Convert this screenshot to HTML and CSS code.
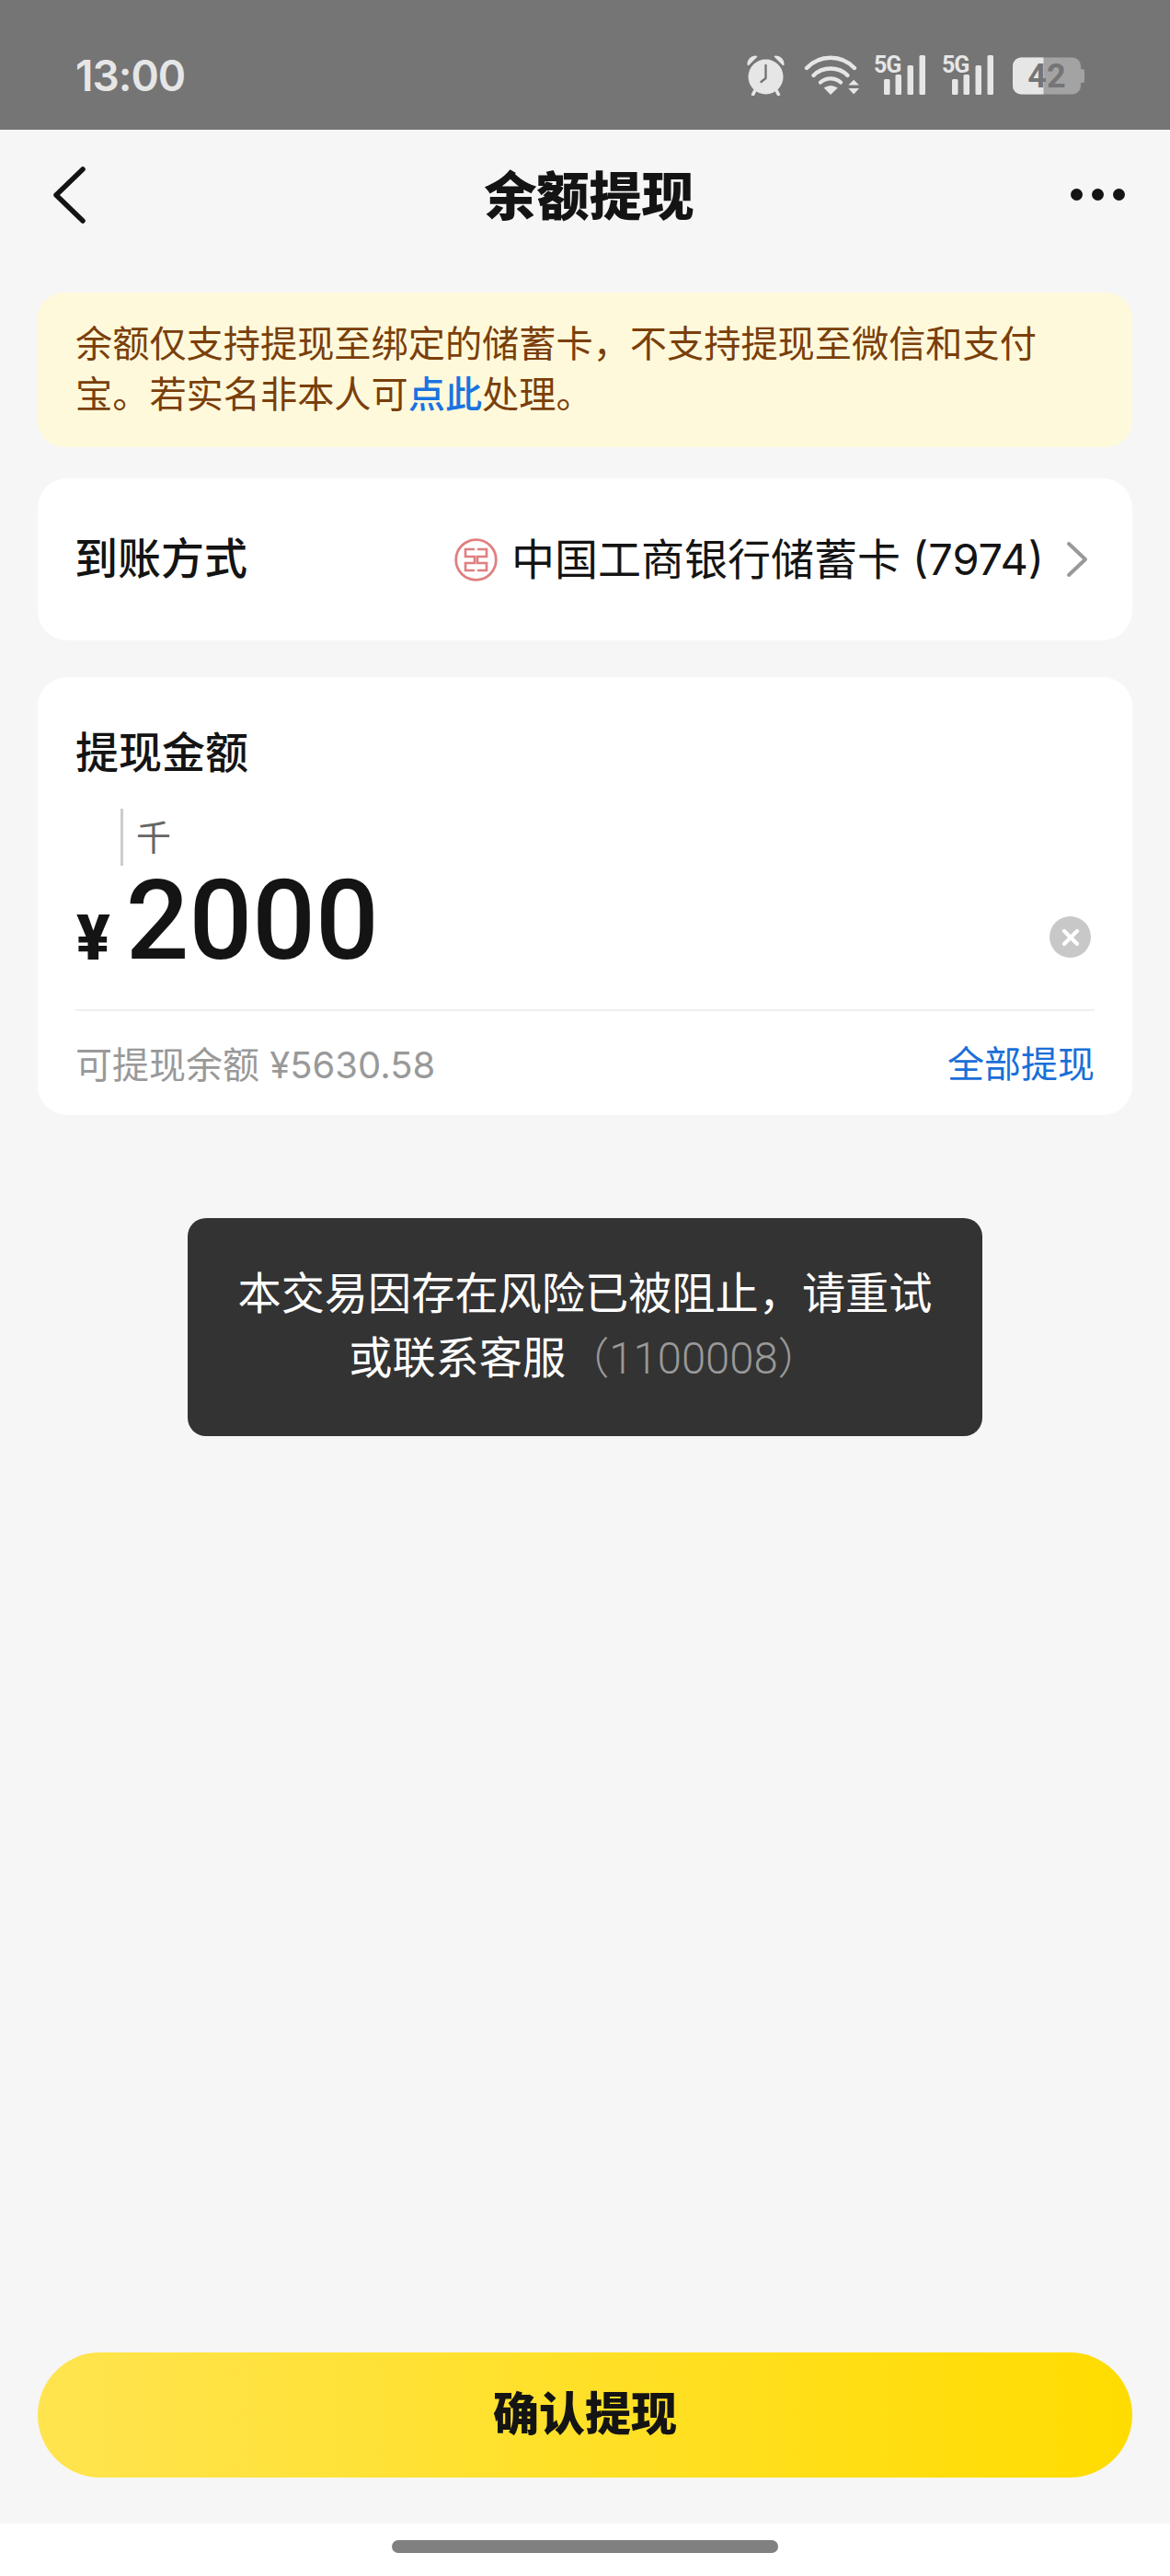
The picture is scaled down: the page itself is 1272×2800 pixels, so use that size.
FILE: index.html
```html
<!DOCTYPE html>
<html lang="zh-CN">
<head>
<meta charset="utf-8">
<title>余额提现</title>
<link rel="stylesheet" href="styles.css">
</head>
<body>
<div class="app">
  <header class="status">
    <span class="time">13:00</span>
    <div class="status-icons">
      <svg class="ic-alarm" width="43" height="45" viewBox="0 0 43 45">
        <circle cx="21.5" cy="24.5" r="19" fill="#e6e6e6"/>
        <path d="M1.5 11.5C1 6 5 1.5 11 1.5c1.2 0 1.6 1 .8 1.8L3.3 11.8c-.7.7-1.6.6-1.8-.3zM41.5 11.5C42 6 38 1.5 32 1.5c-1.2 0-1.6 1-.8 1.8l8.5 8.5c.7.7 1.6.6 1.8-.3z" fill="#e6e6e6"/>
        <path d="M10 39l-3 6M33 39l3 6" stroke="#e6e6e6" stroke-width="3.5"/>
        <path d="M21.5 12v14l-5 4" fill="none" stroke="#757575" stroke-width="2.4" stroke-linecap="round" stroke-linejoin="round"/>
      </svg>
      <svg class="ic-wifi" width="60" height="43" viewBox="0 0 60 43">
        <g fill="none" stroke="#e6e6e6" stroke-width="4.4" stroke-linecap="round">
          <path d="M3 14C17 -1 41 -1 55 14"/>
          <path d="M10.5 22C20 12 38 12 47.5 22"/>
          <path d="M18 29.5C24 24 34 24 40 29.5"/>
        </g>
        <path d="M21.7 35.5Q29 30.5 36.7 35.5L29 43zM48.3 32.5L54.2 26.7 60 32.5zM48.3 36L60 36 54.2 42.5z" fill="#e6e6e6"/>
      </svg>
      <svg class="ic-cell" width="57" height="50" viewBox="0 -6 57 50">
        <text class="cell-text" x="0" y="19.5">5G</text>
        <rect x="11" y="27" width="6.5" height="17" rx="1.5"/>
        <rect x="23.5" y="22" width="6.5" height="22" rx="1.5"/>
        <rect x="36.5" y="12" width="6.5" height="32" rx="1.5"/>
        <rect x="49.5" y="1" width="6.5" height="43" rx="1.5"/>
      </svg>
      <svg class="ic-cell" width="57" height="50" viewBox="0 -6 57 50">
        <text class="cell-text" x="0" y="19.5">5G</text>
        <rect x="11" y="27" width="6.5" height="17" rx="1.5"/>
        <rect x="23.5" y="22" width="6.5" height="22" rx="1.5"/>
        <rect x="36.5" y="12" width="6.5" height="32" rx="1.5"/>
        <rect x="49.5" y="1" width="6.5" height="43" rx="1.5"/>
      </svg>
      <svg class="ic-batt" width="78" height="41" viewBox="0 0 78 41">
        <rect x="0" y="0.5" width="74" height="40" rx="9" fill="#a3a3a3"/>
        <path d="M33.5 .5H9a9 9 0 0 0-9 9v22a9 9 0 0 0 9 9h24.5z" fill="#e6e6e6"/>
        <path d="M74 13h1.5a2.5 2.5 0 0 1 2.5 2.5v10a2.5 2.5 0 0 1-2.5 2.5H74z" fill="#a3a3a3"/>
        <text class="batt-text" x="37" y="33">42</text>
      </svg>
    </div>
  </header>

  <nav class="nav">
    <svg class="nav-back" width="36" height="62" viewBox="0 0 36 62">
      <path d="M32 3L3 31l29 28" fill="none" stroke="#141414" stroke-width="5.5" stroke-linecap="round" stroke-linejoin="round"/>
    </svg>
    <h1 class="nav-title">余额提现</h1>
    <div class="nav-more"><i></i><i></i><i></i></div>
  </nav>

  <main class="content">
    <p class="notice">余额仅支持提现至绑定的储蓄卡，不支持提现至微信和支付宝。若实名非本人可<a class="notice-link">点此</a>处理。</p>

    <section class="card method">
      <span class="method-label">到账方式</span>
      <div class="method-value">
        <svg class="bank-logo" width="47" height="47" viewBox="0 0 47 47">
          <circle cx="23.5" cy="23.5" r="21.8" fill="none" stroke="#e07f80" stroke-width="2.8"/>
          <path d="M22 12H12V20H22V27H12V35H22M25 12H35V20H25V27H35V35H25" fill="none" stroke="#e07f80" stroke-width="2.6"/>
        </svg>
        <span class="bank-name">中国工商银行储蓄卡 (7974)</span>
        <svg class="chev" width="24" height="40" viewBox="0 0 24 40">
          <path d="M3 3l18 17L3 37" fill="none" stroke="#999" stroke-width="4" stroke-linecap="round" stroke-linejoin="round"/>
        </svg>
      </div>
    </section>

    <section class="card amount">
      <h2 class="amount-title">提现金额</h2>
      <div class="unit-row"><span class="caret"></span><span class="unit">千</span></div>
      <div class="amount-row">
        <span class="yen">¥</span>
        <span class="value">2000</span>
        <span class="clear">
          <svg width="20" height="20" viewBox="0 0 20 20"><path d="M3 3l14 14M17 3L3 17" stroke="#fff" stroke-width="4.2" stroke-linecap="round"/></svg>
        </span>
      </div>
      <div class="amount-foot">
        <span class="balance">可提现余额 ¥5630.58</span>
        <a class="all">全部提现</a>
      </div>
    </section>
  </main>

  <div class="toast">本交易因存在风险已被阻止，请重试<br>或联系客服<span class="toast-code">（1100008）</span></div>

  <div class="action"><button class="confirm">确认提现</button></div>

  <footer class="home"><span class="home-bar"></span></footer>
</div>
</body>
</html>
```
FILE: styles.css
```css
* { box-sizing: border-box; }
html, body { margin: 0; padding: 0; }
body {
  font-family: Roboto, "Noto Sans CJK SC", sans-serif;
  color: #141414;
  background: #f6f6f6;
}
.app {
  position: relative;
  width: 1272px;
  height: 2800px;
  display: flex;
  flex-direction: column;
  background: #f6f6f6;
}

/* status bar */
.status {
  height: 141px;
  flex: none;
  background: #757575;
  display: flex;
  align-items: flex-start;
  justify-content: space-between;
  padding: 59px 93px 0 82px;
}
.time {
  font-family: Inter, Roboto, sans-serif;
  font-size: 46px;
  line-height: 46px;
  font-weight: 600;
  letter-spacing: -1px;
  color: #e6e6e6;
}
.status-icons { display: flex; align-items: flex-start; }
.status-icons svg { display: block; flex: none; }
.ic-wifi { margin: 1px 0 0 20px; }
.ic-cell { margin: -6px 0 0 16px; fill: #e6e6e6; }
.ic-cell + .ic-cell { margin-left: 17px; }
.ic-batt { margin: 3px 0 0 20px; }
.cell-text {
  font-family: Roboto, sans-serif;
  font-size: 25px;
  font-weight: 700;
  letter-spacing: -1.2px;
  fill: #e6e6e6;
}
.batt-text {
  font-family: Roboto, sans-serif;
  font-size: 36px;
  font-weight: 700;
  text-anchor: middle;
  fill: #757575;
}

/* nav */
.nav {
  height: 177px;
  flex: none;
  display: grid;
  grid-template-columns: 1fr auto 1fr;
  align-items: center;
  padding: 0 49px 36px 58px;
}
.nav-back { display: block; }
.nav-title {
  margin: 6px 0 0;
  font-size: 57px;
  line-height: 70px;
  font-weight: 900;
}
.nav-more { display: flex; gap: 10px; justify-content: flex-end; }
.nav-more i {
  display: block;
  width: 13px;
  height: 13px;
  border-radius: 50%;
  background: #141414;
}

/* content */
.content {
  padding: 0 41px;
  display: flex;
  flex-direction: column;
}
.notice {
  margin: 0 0 34px;
  height: 168px;
  padding: 29px 41px 0;
  border-radius: 28px;
  background: #fff9dc;
  color: #7a3f0a;
  font-size: 40.2px;
  line-height: 55px;
}
.notice-link { color: #1a73e0; font-weight: 500; }
.card {
  background: #fff;
  border-radius: 32px;
}
.method {
  height: 176px;
  margin-bottom: 40px;
  padding: 0 48px 0 40px;
  display: flex;
  align-items: center;
  justify-content: space-between;
}
.method-label { font-size: 47px; line-height: 60px; font-weight: 500; }
.method-value { display: flex; align-items: center; }
.bank-logo { display: block; margin-right: 15px; }
.bank-name {
  font-family: Inter, "Noto Sans CJK SC", sans-serif;
  font-size: 47px;
  line-height: 60px;
}
.chev { display: block; margin-left: 24px; }

.amount {
  height: 476px;
  padding: 53px 41px 0 41px;
  display: flex;
  flex-direction: column;
}
.amount-title {
  margin: 0;
  font-size: 47px;
  line-height: 60px;
  font-weight: 500;
}
.unit-row {
  height: 64px;
  margin-top: 30px;
  padding-left: 49px;
  display: flex;
  align-items: flex-start;
}
.caret {
  width: 3px;
  height: 62px;
  background: #ccc;
}
.unit {
  margin: 7px 0 0 14px;
  font-size: 38px;
  line-height: 50px;
  color: #666;
}
.amount-row {
  height: 156px;
  padding-bottom: 46px;
  display: flex;
  align-items: flex-end;
  border-bottom: 2px solid #f0f0f0;
}
.yen {
  font-size: 68px;
  line-height: 50px;
  font-weight: 900;
  margin: 0 0 6px 1px;
}
.value {
  margin-left: 17px;
  font-size: 121px;
  line-height: 100px;
  font-weight: 500;
}
.clear {
  width: 45px;
  height: 45px;
  margin: 0 4px 10px auto;
  border-radius: 50%;
  background: #c8c8c8;
  display: flex;
  align-items: center;
  justify-content: center;
}
.clear svg { display: block; }
.amount-foot {
  flex: 1;
  padding-top: 4px;
  display: flex;
  align-items: center;
  justify-content: space-between;
}
.balance {
  font-family: Inter, "Noto Sans CJK SC", sans-serif;
  font-size: 40px;
  line-height: 56px;
  color: #999;
}
.all { font-size: 40px; line-height: 56px; color: #1a6fd8; }

/* toast overlays the page */
.toast {
  position: absolute;
  left: 204px;
  top: 1324px;
  width: 864px;
  height: 237px;
  padding-top: 48px;
  border-radius: 20px;
  background: #333;
  color: #fff;
  font-size: 47.2px;
  line-height: 70px;
  font-weight: 400;
  text-align: center;
}
.toast-code { color: #999; font-weight: 300; }

/* action */
.action {
  margin-top: auto;
  padding: 0 41px 50px;
  flex: none;
}
.confirm {
  display: block;
  width: 100%;
  height: 136px;
  border: 0;
  padding: 0 0 10px;
  border-radius: 68px;
  background: linear-gradient(90deg, #ffe44f 0%, #ffdc00 100%);
  color: #141414;
  font-family: inherit;
  font-size: 50px;
  font-weight: 900;
}
.home {
  height: 57px;
  flex: none;
  background: #fff;
  display: flex;
  justify-content: center;
  padding-top: 18px;
}
.home-bar {
  display: block;
  width: 420px;
  height: 14px;
  border-radius: 7px;
  background: #808080;
}
```
